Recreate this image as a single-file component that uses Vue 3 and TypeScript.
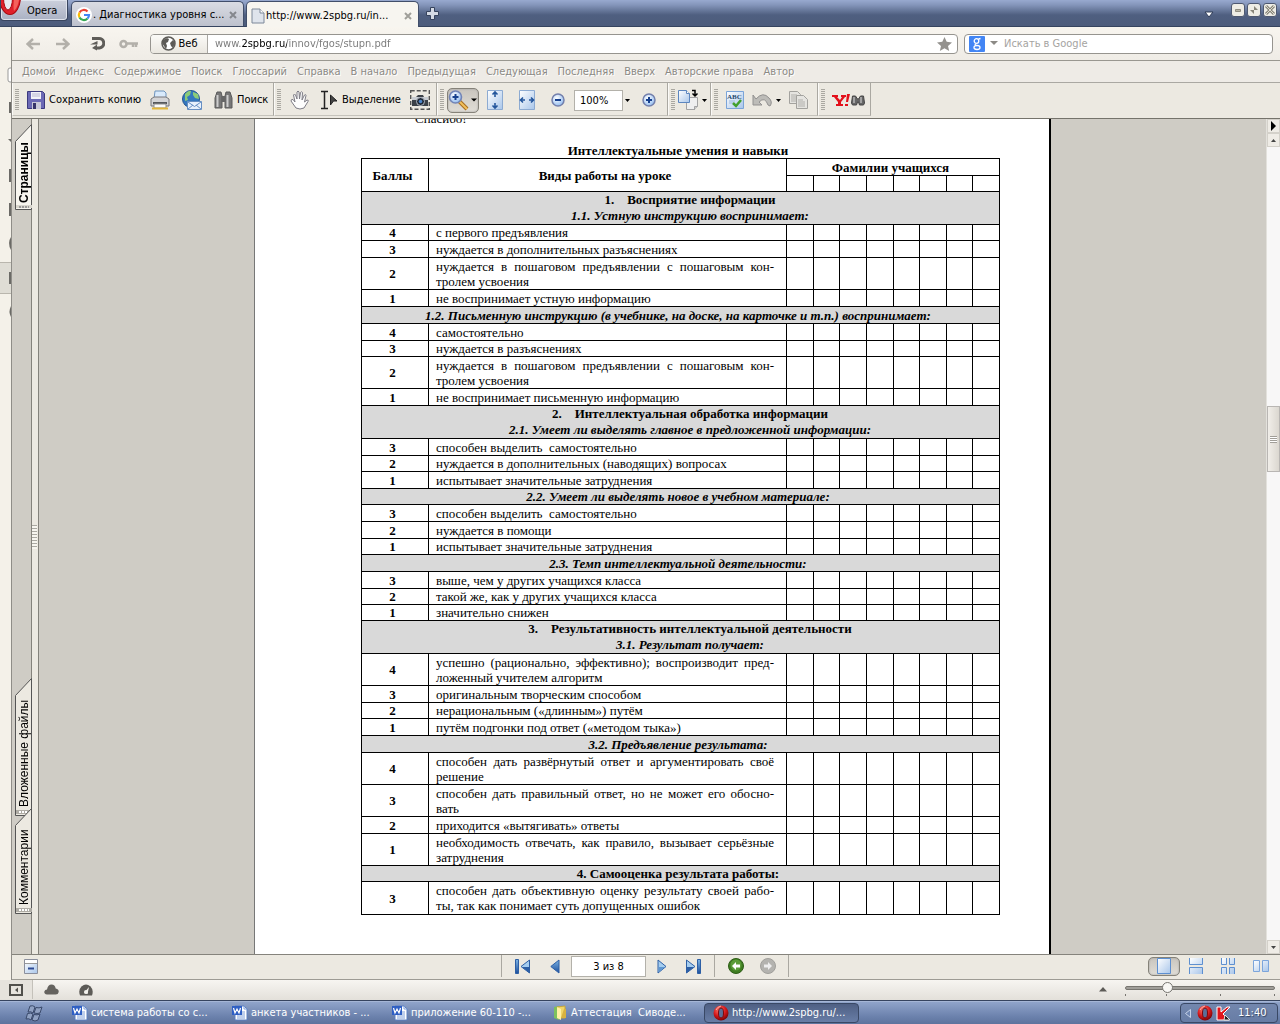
<script setup lang="ts">
import { ref } from 'vue'

interface Row {
  kind: 'row' | 'head' | 'group'
  size: 's16' | 's17' | 's32' | 's33'
  score?: number
  lines: string[]
}

const row = (size: Row['size'], score: number, ...lines: string[]): Row => ({ kind: 'row', size, score, lines })
const head = (size: Row['size'], text: string): Row => ({ kind: 'head', size, lines: [text] })
const group = (...lines: string[]): Row => ({ kind: 'group', size: 's33', lines })

const gap = '\u00a0\u00a0\u00a0\u00a0'

const rows: Row[] = [
  group('1.' + gap + 'Восприятие информации', '1.1. Устную инструкцию воспринимает:'),
  row('s16', 4, 'с первого предъявления'),
  row('s17', 3, 'нуждается в дополнительных разъяснениях'),
  row('s32', 2, 'нуждается в пошаговом предъявлении с пошаговым кон-', 'тролем усвоения'),
  row('s17', 1, 'не воспринимает устную информацию'),
  head('s17', '1.2. Письменную инструкцию (в учебнике, на доске, на карточке и т.п.) воспринимает:'),
  row('s17', 4, 'самостоятельно'),
  row('s16', 3, 'нуждается в разъяснениях'),
  row('s32', 2, 'нуждается в пошаговом предъявлении с пошаговым кон-', 'тролем усвоения'),
  row('s17', 1, 'не воспринимает письменную информацию'),
  group('2.' + gap + 'Интеллектуальная обработка информации', '2.1. Умеет ли выделять главное в предложенной информации:'),
  row('s17', 3, 'способен выделить\u00a0 самостоятельно'),
  row('s16', 2, 'нуждается в дополнительных (наводящих) вопросах'),
  row('s17', 1, 'испытывает значительные затруднения'),
  head('s16', '2.2. Умеет ли выделять новое в учебном материале:'),
  row('s17', 3, 'способен выделить\u00a0 самостоятельно'),
  row('s17', 2, 'нуждается в помощи'),
  row('s16', 1, 'испытывает значительные затруднения'),
  head('s17', '2.3. Темп интеллектуальной деятельности:'),
  row('s17', 3, 'выше, чем у других учащихся класса'),
  row('s16', 2, 'такой же, как у других учащихся класса'),
  row('s16', 1, 'значительно снижен'),
  group('3.' + gap + 'Результативность интеллектуальной деятельности', '3.1. Результат получает:'),
  row('s32', 4, 'успешно (рационально, эффективно); воспроизводит пред-', 'ложенный учителем алгоритм'),
  row('s17', 3, 'оригинальным творческим способом'),
  row('s16', 2, 'нерациональным («длинным») путём'),
  row('s17', 1, 'путём подгонки под ответ («методом тыка»)'),
  head('s17', '3.2. Предъявление результата:'),
  row('s32', 4, 'способен дать развёрнутый ответ и аргументировать своё', 'решение'),
  row('s32', 3, 'способен дать правильный ответ, но не может его обосно-', 'вать'),
  row('s17', 2, 'приходится «вытягивать» ответы'),
  row('s32', 1, 'необходимость отвечать, как правило, вызывает серьёзные', 'затруднения'),
  head('s16', '4. Самооценка результата работы:'),
  row('s33', 3, 'способен дать объективную оценку результату своей рабо-', 'ты, так как понимает суть допущенных ошибок'),
]

const links = ['Домой', 'Индекс', 'Содержимое', 'Поиск', 'Глоссарий', 'Справка', 'В начало', 'Предыдущая',
  'Следующая', 'Последняя', 'Вверх', 'Авторские права', 'Автор']

const tasks = [
  { icon: 'word', text: 'система работы со с...', active: false },
  { icon: 'word', text: 'анкета участников - ...', active: false },
  { icon: 'word', text: 'приложение 60-110 -...', active: false },
  { icon: 'folder', text: 'Аттестация\u00a0 Сиводе...', active: false },
  { icon: 'opera', text: 'http://www.2spbg.ru/...', active: true },
]

const address = ref('www.2spbg.ru/innov/fgos/stupn.pdf')
const query = ref('')
const zoom = ref('100%')
const page = ref('3 из 8')
const scale = ref(26)
</script>

<template>
  <div class="browser">
    <svg class="defs" aria-hidden="true">
      <defs>
        <linearGradient id="gBlue" x1="0" y1="0" x2="1" y2="1"><stop offset="0" stop-color="#fff" /><stop offset="1" stop-color="#a9c6ea" /></linearGradient>
        <linearGradient id="gNav" x1="0" y1="0" x2="0" y2="1"><stop offset="0" stop-color="#7db4e4" /><stop offset="1" stop-color="#1d4f9c" /></linearGradient>
        <radialGradient id="gRed" cx=".4" cy=".3" r=".7"><stop offset="0" stop-color="#ff7a6c" /><stop offset=".6" stop-color="#d3161a" /><stop offset="1" stop-color="#7d0508" /></radialGradient>
        <radialGradient id="gLens" cx=".4" cy=".35" r=".7"><stop offset="0" stop-color="#fff" /><stop offset="1" stop-color="#8db9ef" /></radialGradient>
      </defs>
      <symbol id="word" viewBox="0 0 16 16">
        <path d="M3 1h9l3 3v11H3z" fill="#fff" stroke="#5b7ec0" />
        <path d="M12 1v3h3M10 7h3M10 9h3M5 11h8M5 13h8" fill="none" stroke="#7f9fd8" />
        <path d="M0 1h10v9H0z" fill="#2f5fc4" />
        <path d="M1.500 3l1.500 5 2-4 2 4 1.500-5" fill="none" stroke="#fff" stroke-width="1.200" />
      </symbol>
      <symbol id="folder" viewBox="0 0 16 16">
        <path d="M2 2l5-1v14l-5-2z" fill="#7cc05e" />
        <path d="M5 2l8-1v12H7z" fill="#f1d667" stroke="#c6a63c" />
        <path d="M5 2l4 2v11l-4-2z" fill="#fff1a5" />
        <path d="M12 4h2v9h-5" fill="#d8b23f" />
      </symbol>
      <symbol id="opera" viewBox="0 0 16 16">
        <circle cx="8" cy="8" r="7.500" fill="url(#gRed)" />
        <ellipse cx="8" cy="8" rx="2.500" ry="5" fill="#5a6e97" stroke="#7c070a" />
        <path d="M3 5q1-3 5-4" fill="none" stroke="#ffb3a8" />
      </symbol>
    </svg>

    <header class="titlebar">
      <button class="opera-menu" type="button">
        <svg width="20" height="16" viewBox="0 0 20 16"><ellipse cx="9" cy="-3" rx="11" ry="18" fill="#a80a10" /><ellipse cx="9" cy="-3" rx="10" ry="17" fill="#e0202a" /><path d="M13 0h5q-1 7-5 11-1-4 0-11z" fill="#f4625c" /><ellipse cx="7" cy="-2" rx="4.500" ry="12" fill="#e9ebf1" stroke="#a80a10" /></svg>
        <span>Opera</span>
      </button>
      <div class="tabs">
        <div class="tab">
          <svg width="16" height="16" viewBox="0 0 16 16"><circle cx="8" cy="8" r="8" fill="#fff" /><g fill="none" stroke-width="2.200"><path d="M3.500 5.500A5 5 0 0 1 11.500 4.500" stroke="#ea4335" /><path d="M3.500 5.500a5 5 0 0 0 0 5" stroke="#fbbc05" /><path d="M3.500 10.500a5 5 0 0 0 8 1" stroke="#34a853" /><path d="M11.500 11.500A5 5 0 0 0 13 8H8" stroke="#4285f4" /></g></svg>
          <span>. Диагностика уровня с...</span>
          <button class="close" type="button" aria-label="Закрыть"><svg width="8" height="8" viewBox="0 0 8 8"><path d="M1 1l6 6M7 1L1 7" stroke="#85878d" stroke-width="2" /></svg></button>
        </div>
        <div class="tab current">
          <svg width="14" height="16" viewBox="0 0 14 16"><path d="M1 1h8l4 4v10H1z" fill="#dfe4ec" stroke="#7d8899" /><path d="M9 1v4h4" fill="#fff" stroke="#7d8899" /></svg>
          <span>http://www.2spbg.ru/in...</span>
          <button class="close" type="button" aria-label="Закрыть"><svg width="8" height="8" viewBox="0 0 8 8"><path d="M1 1l6 6M7 1L1 7" stroke="#a09f9a" stroke-width="2" /></svg></button>
        </div>
      </div>
      <button class="plus" type="button" aria-label="Новая вкладка"><svg width="13" height="13" viewBox="0 0 13 13"><path d="M4.500.5h4v4h4v4h-4v4h-4v-4h-4v-4h4z" fill="#d5dae4" stroke="#36435d" /></svg></button>
      <button class="closed-tabs" type="button" aria-label="Закрытые вкладки"><svg width="10" height="7" viewBox="0 0 10 7"><path d="M1 1h8L5 6z" fill="#fff" stroke="#2f3c57" /></svg></button>
      <div class="window-buttons">
        <button type="button" aria-label="Свернуть"><svg width="12" height="12" viewBox="0 0 12 12"><path d="M3.500 5.500h5v2h-5z" fill="#b9b7a8" stroke="#8f8d80" /></svg></button>
        <button type="button" aria-label="Развернуть"><svg width="12" height="12" viewBox="0 0 12 12"><path d="M6 2l4 4H6zM6 10L2 6h4z" fill="#88867a" /></svg></button>
        <button type="button" aria-label="Закрыть окно"><svg width="12" height="12" viewBox="0 0 12 12"><path d="M2 2l8 8M10 2l-8 8" stroke="#88867a" stroke-width="3" /><path d="M2 2l8 8M10 2l-8 8" stroke="#dddbd0" /></svg></button>
      </div>
    </header>

    <div class="body">
      <aside class="sliver">
        <svg width="11" height="300" viewBox="0 0 11 300">
          <rect x="0" y="235" width="11" height="31" fill="#dfddd5" /><path d="M0 235.500h11M0 266.500h11" stroke="#b9b6ad" />
          <rect x="8" y="41" width="5" height="14" rx="2" fill="#fff" stroke="#999" />
          <g fill="#6b6a66"><rect x="9" y="75" width="2" height="11" /><path d="M8 112h3v3z" /><rect x="9" y="142" width="2" height="13" /><rect x="9" y="176" width="2" height="13" /><path d="M11 210q-4 6 0 13z" /><rect x="9" y="245" width="2" height="12" /><path d="M11 279q-3 6 0 11z" /></g>
        </svg>
      </aside>

      <div class="main">
        <div class="address-bar">
          <button class="nav" type="button" aria-label="Назад"><svg width="14" height="12" viewBox="0 0 14 12"><path d="M7 1L1.500 6 7 11M2 6h12" fill="none" stroke="#b3b0aa" stroke-width="2.500" /></svg></button>
          <button class="nav" type="button" aria-label="Вперёд"><svg width="14" height="12" viewBox="0 0 14 12"><path d="M7 1l5.500 5L7 11M12 6H0" fill="none" stroke="#b3b0aa" stroke-width="2.500" /></svg></button>
          <button class="nav reload" type="button" aria-label="Обновить"><svg width="15" height="15" viewBox="0 0 15 15"><path d="M2 2.500h6.500a4.500 4.500 0 0 1 1 9.500H6" fill="none" stroke="#5f5d59" stroke-width="3" /><path d="M0 8.500h7.500V5zM7 8.500v6L2 12z" fill="#5f5d59" /></svg></button>
          <button class="nav key" type="button" aria-label="Пароли"><svg width="19" height="10" viewBox="0 0 19 10"><circle cx="4.500" cy="5" r="3" fill="none" stroke="#b3b0aa" stroke-width="2.500" /><path d="M8 4.500h11M14 5v3M17 5v3" stroke="#b3b0aa" stroke-width="2.500" /></svg></button>
          <div class="field address">
            <button class="web" type="button">
              <svg width="15" height="15" viewBox="0 0 15 15"><circle cx="7.500" cy="7.500" r="6.500" fill="#fff" stroke="#5d5b57" stroke-width="1.500" /><path d="M2 4l4-2 2 1-1 3-2 1 1 3-1 3-2-3-2-3zM9 7l3-3 2 3-2 5-2-2z" fill="#5d5b57" /></svg>
              <span>Веб</span>
            </button>
            <input v-model="address" class="url" type="text" aria-label="Адрес" spellcheck="false">
            <svg class="star" width="15" height="14" viewBox="0 0 15 14"><path d="M7.500 0l2.200 4.800 5.300.6-4 3.500 1.200 5.100-4.700-2.700L2.800 14 4 8.900 0 5.400l5.300-.6z" fill="#94928e" /></svg>
          </div>
          <div class="field search">
            <svg width="16" height="16" viewBox="0 0 16 16"><rect width="16" height="16" rx="1" fill="#4285f4" /><g fill="none" stroke="#fff" stroke-width="1.300"><circle cx="7.500" cy="5" r="2.300" /><path d="M9.500 3l2-.5M6.500 7.500q-1 1.500 1 2" /><ellipse cx="8" cy="11.500" rx="3" ry="2" /></g></svg>
            <svg width="8" height="5" viewBox="0 0 8 5"><path d="M0 0h8L4 4z" fill="#8c8a85" /></svg>
            <input v-model="query" type="text" aria-label="Поиск в Google" placeholder="Искать в Google">
          </div>
        </div>

        <nav class="links"><a v-for="link in links" :key="link" href="#">{{ link }}</a></nav>

        <div class="toolbar">
          <div class="tools file">
            <button type="button" class="labelled"><svg width="18" height="18" viewBox="0 0 18 18"><path d="M.5.500h15l2 2v15H.5z" fill="#6b69b5" stroke="#3b397e" /><path d="M4 1h10v7H4z" fill="#f2f2f8" /><path d="M5 11h9v7H5z" fill="#c9c9d9" /><path d="M6 12h3v6H6z" fill="#36346b" /><path d="M5 3h8M5 5h8" stroke="#b9b8d2" /></svg><span>Сохранить копию</span></button>
            <button type="button" aria-label="Печать"><svg width="20" height="20" viewBox="0 0 20 20"><path d="M5 1h9l2 2v6H4z" fill="#d9eafb" stroke="#6e94bd" /><path d="M1 9l3-2h12l3 2v7H1z" fill="#d4d4d6" stroke="#76777a" /><path d="M3 12h14v2H3z" fill="#56585c" /><path d="M4 14h12v4H4z" fill="#fafafa" stroke="#8e8e8e" /><path d="M2 18.500h16" stroke="#e3b63b" stroke-width="2" /></svg></button>
            <button type="button" aria-label="Отправить"><svg width="20" height="20" viewBox="0 0 20 20"><circle cx="9" cy="9" r="8.500" fill="#3477be" stroke="#235590" /><path d="M3 4q4-4 6-3l-1 4-3 2 1 3-3 1zM11 2l5 2 1 5-4-1-2-3zM5 12l4 1v4z" fill="#8ccb78" /><path d="M5.500 11.500h14v8h-14z" fill="#e7f1fd" stroke="#668fc3" /><path d="M6 12l6.500 4.500L19 12M6 19l5-4M19 19l-5-4" fill="none" stroke="#668fc3" /></svg></button>
            <button type="button" class="labelled"><svg width="19" height="18" viewBox="0 0 19 18"><path d="M3 1h4l1 4v12H1V7zM12 1h4l2 6v10h-7V5z" fill="#777" stroke="#5a5a5a" /><path d="M8 5h3v6H8z" fill="#666" /><path d="M3.500 4v12M13.500 4v12" stroke="#cecece" stroke-width="2" /></svg><span>Поиск</span></button>
          </div>
          <div class="tools select">
            <button type="button" aria-label="Рука"><svg width="19" height="20" viewBox="0 0 19 20"><path d="M6 18L1 11q0-2 2-1.500L5 12 3.500 5q1-2 2 0L7 9 7 2q1-2 2 0l.5 7 1-6.500q1-1.500 2 0L12 10l2.500-5q1.500-1 1.500.5L14.500 12 17 10q2 0 1 1.500L14 18q-4 2-8 0z" fill="#fdfdfd" stroke="#7e7d86" /></svg></button>
            <button type="button" class="labelled"><svg width="18" height="20" viewBox="0 0 18 20"><path d="M1 1.500h7M1 18.500h7M4.500 2v16" stroke="#222" stroke-width="1.500" /><path d="M10.500 5l6.500 6h-3.500l-3 4z" fill="#444" stroke="#222" /></svg><span>Выделение</span></button>
            <button type="button" aria-label="Снимок"><svg width="20" height="20" viewBox="0 0 20 20"><path d="M.7.700h18.600v18.600H.7z" fill="none" stroke="#555" stroke-width="1.400" stroke-dasharray="4 2" /><path d="M2 7h4l2-2h5l1 2h4v9H2z" fill="#3c4148" /><path d="M2 7h16v3H2z" fill="#c8ccd2" /><circle cx="10.500" cy="11.500" r="4" fill="#222a38" stroke="#b3bac4" /><circle cx="10.500" cy="11.500" r="1.800" fill="#4d86c9" /></svg></button>
          </div>
          <div class="tools zooming">
            <button type="button" class="pressed" aria-label="Увеличение"><svg width="30" height="22" viewBox="0 0 30 22"><path d="M11 12l8 8" stroke="#a86d20" stroke-width="4" /><path d="M11 12l8 8" stroke="#f1c15c" stroke-width="2" /><circle cx="7.500" cy="8" r="6" fill="url(#gLens)" stroke="#7284b6" stroke-width="1.600" /><path d="M4.500 8h6M7.500 5v6" stroke="#16408e" stroke-width="2" /><path d="M23 9.500h6l-3 3z" fill="#000" /></svg></button>
            <button type="button" aria-label="Страница целиком"><svg width="16" height="20" viewBox="0 0 16 20"><path d="M.5.500h15v19H.5z" fill="url(#gBlue)" stroke="#8dabd2" /><path d="M8 2v5M8 13v5M5.500 4.500L8 2l2.500 2.500M5.500 15.500L8 18l2.500-2.500" fill="none" stroke="#24569c" stroke-width="1.600" /></svg></button>
            <button type="button" aria-label="По ширине"><svg width="16" height="20" viewBox="0 0 16 20"><path d="M.5.500h15v19H.5z" fill="url(#gBlue)" stroke="#8dabd2" /><path d="M2 10h4M10 10h4M4 7.500L1.500 10 4 12.500M12 7.500l2.500 2.500-2.500 2.500" fill="none" stroke="#24569c" stroke-width="1.600" /></svg></button>
            <button type="button" aria-label="Уменьшить"><svg width="14" height="14" viewBox="0 0 14 14"><circle cx="7" cy="7" r="6" fill="url(#gLens)" stroke="#7480ac" stroke-width="1.500" /><path d="M4 7h6" stroke="#16408e" stroke-width="2" /></svg></button>
            <div class="combo"><input v-model="zoom" type="text" aria-label="Масштаб"><button type="button" aria-label="Список масштабов"><svg width="5" height="3" viewBox="0 0 5 3"><path d="M0 0h5L2.500 3z" /></svg></button></div>
            <button type="button" aria-label="Увеличить"><svg width="14" height="14" viewBox="0 0 14 14"><circle cx="7" cy="7" r="6" fill="url(#gLens)" stroke="#7480ac" stroke-width="1.500" /><path d="M4 7h6M7 4v6" stroke="#16408e" stroke-width="2" /></svg></button>
          </div>
          <div class="tools turn">
            <button type="button" aria-label="Повернуть"><svg width="30" height="22" viewBox="0 0 30 22"><path d="M8.500 8.500h11v9l-3 3h-8z" fill="#efefef" stroke="#a3a3a3" /><path d="M16.500 21v-3.500h3" fill="#ccc" stroke="#a3a3a3" /><path d="M.5 1.500h8l3 3v9H.5z" fill="url(#gBlue)" stroke="#5c86bf" /><path d="M8.500 1.500v3h3" fill="#fff" stroke="#5c86bf" /><path d="M14 1.500h3V6M14.500 4.500L17 7l2.500-2.500" fill="none" stroke="#000" stroke-width="1.500" /><path d="M24 10h5l-2.500 3z" fill="#000" /></svg></button>
          </div>
          <div class="tools edit">
            <button type="button" aria-label="Правописание"><svg width="18" height="18" viewBox="0 0 18 18"><path d="M.5.500h17v17H.5z" fill="url(#gBlue)" stroke="#7ba4d8" /><text x="1" y="8" font-size="7" font-weight="700" fill="#25486f" font-family="Liberation Serif">ABC</text><path d="M3 10h6M3 12h4" stroke="#9cb9dd" /><path d="M7 12l3 3 5-6" fill="none" stroke="#43a02c" stroke-width="2.500" /></svg></button>
            <button type="button" aria-label="Отменить"><svg width="29" height="16" viewBox="0 0 29 16"><path d="M1 3v10h9l-3-3q6-6 9 3l2 1q3-4-1-8Q11-1 4 7z" fill="#bdbcb8" stroke="#929190" /><path d="M24 7h5l-2.500 3z" fill="#000" /></svg></button>
            <button type="button" aria-label="Копировать"><svg width="19" height="18" viewBox="0 0 19 18"><path d="M.5.500h8l3 3v9H.5z" fill="#e5e4e0" stroke="#a3a29e" /><path d="M2 4h6M2 6h5M2 8h5M2 10h5" stroke="#b0afab" /><path d="M7.500 4.500h7l4 4v9h-11z" fill="#e5e4e0" stroke="#a3a29e" /><path d="M9 9h5M9 11h7M9 13h7M9 15h7" stroke="#b0afab" /></svg></button>
          </div>
          <div class="tools yahoo">
            <button type="button" aria-label="Yahoo"><svg width="33" height="14" viewBox="0 0 33 14"><path d="M0 2h6v2H5l3 3 2-3H9V2h5v2h-1l-4 5v2h2v2H4v-2h2V9L2 4H0zM15 1h3l-2 8h-2zM13 11h3v2h-3z" fill="#e3101a" /><path d="M20.500 3h3l2 3h1l2-3h3l1 7-1 2h-4l-1-3h-1l-1 3h-4l-1-2z" fill="#666" stroke="#444" /><path d="M22 4v6M29 4v6" stroke="#b5b5b5" stroke-width="1.500" /></svg></button>
          </div>
        </div>

        <div class="reader">
          <div class="rail">
            <button class="side first" type="button"><svg width="17" height="86" viewBox="0 0 17 86"><path d="M.5 85.500V17.500L16.500.5v85z" fill="#f7f5ef" stroke="#555" /><path d="M1 81h16v3H1z" fill="#d8d5cd" /><path d="M4 83h10" stroke="#999" stroke-width="2" stroke-dasharray="2 1" /></svg><span>Страницы</span></button>
            <button class="side second" type="button"><svg width="17" height="138" viewBox="0 0 17 138"><path d="M.5 137.500v-120L16.500.5v137z" fill="#ece9e1" stroke="#555" /><path d="M1 132h16v4H1z" fill="#aeaba4" /><path d="M4 134h10" stroke="#fff" stroke-width="2" stroke-dasharray="2 1" /></svg><span>Вложенные файлы</span></button>
            <button class="side third" type="button"><svg width="17" height="106" viewBox="0 0 17 106"><path d="M.5 105.500v-88L16.500.5v105z" fill="#ece9e1" stroke="#555" /><path d="M1 100h16v4H1z" fill="#aeaba4" /><path d="M4 102h10" stroke="#fff" stroke-width="2" stroke-dasharray="2 1" /></svg><span>Комментарии</span></button>
          </div>
          <div class="splitter"><i /></div>
          <div class="desk">
            <article class="paper">
              <p class="cut">Спасибо!</p>
              <h1>Интеллектуальные умения и навыки</h1>
              <table>
                <colgroup><col class="c-score"><col><col v-for="n in 8" :key="n" :class="[2, 5, 7].includes(n) ? 'c26' : 'c27'"></colgroup>
                <thead>
                  <tr class="s17"><th rowspan="2">Баллы</th><th rowspan="2">Виды работы на уроке</th><th colspan="8">Фамилии учащихся</th></tr>
                  <tr class="s16"><td v-for="n in 8" :key="n" /></tr>
                </thead>
                <tbody>
                  <tr v-for="(r, i) in rows" :key="i" :class="r.size">
                    <template v-if="r.kind === 'row'">
                      <th scope="row">{{ r.score }}</th>
                      <td class="task-text"><span v-for="(line, k) in r.lines" :key="k" :class="{ full: k < r.lines.length - 1 }">{{ line }}</span></td>
                      <td v-for="n in 8" :key="n" />
                    </template>
                    <th v-else colspan="10" :class="r.kind"><span v-for="(line, k) in r.lines" :key="k" :class="{ plain: r.kind === 'group' ? k === 0 : line.startsWith('4.') }">{{ line }}</span></th>
                  </tr>
                </tbody>
              </table>
            </article>
          </div>
          <div class="scroll">
            <button type="button" aria-label="Меню"><svg width="6" height="10" viewBox="0 0 6 10"><path d="M0 0l5 5-5 5z" /></svg></button>
            <button type="button" aria-label="Вверх"><svg width="5" height="3" viewBox="0 0 5 3"><path d="M0 3h5L2.500 0z" fill="#444" /></svg></button>
            <div class="track"><div class="thumb"><i /></div></div>
            <button type="button" aria-label="Вниз"><svg width="5" height="3" viewBox="0 0 5 3"><path d="M0 0h5L2.500 3z" fill="#444" /></svg></button>
          </div>
        </div>

        <div class="pager">
          <div class="pager-left"><button type="button" aria-label="Скрыть"><svg width="14" height="15" viewBox="0 0 14 15"><path d="M.5.500h13v14H.5z" fill="url(#gBlue)" stroke="#8b8f9c" /><path d="M1 1h12v3H1z" fill="#fff" /><path d="M1 4.500h12" stroke="#999" /><path d="M4 9.500h6" stroke="#2d4a94" stroke-width="2" /></svg></button></div>
          <div class="pages">
            <button type="button" aria-label="Первая"><svg width="16" height="15" viewBox="0 0 16 15"><path d="M.5.500h3v14h-3z" fill="url(#gNav)" stroke="#2d5fa5" /><path d="M14.500 1v13L6 7.500z" fill="#a5cdef" stroke="#2d5fa5" /><path d="M14.500 8v6L7 8z" fill="#2d5fa5" /></svg></button>
            <button type="button" aria-label="Предыдущая"><svg width="10" height="15" viewBox="0 0 10 15"><path d="M9 1v13L.8 7.500z" fill="url(#gNav)" stroke="#2d5fa5" /></svg></button>
            <input v-model="page" type="text" aria-label="Страница">
            <button type="button" aria-label="Следующая"><svg width="10" height="15" viewBox="0 0 10 15"><path d="M1 1v13l8-6.500z" fill="#a5cdef" stroke="#2d5fa5" /><path d="M2 13V8h6z" fill="#5f97d1" /></svg></button>
            <button type="button" aria-label="Последняя"><svg width="16" height="15" viewBox="0 0 16 15"><path d="M12.500.500h3v14h-3z" fill="url(#gNav)" stroke="#2d5fa5" /><path d="M1.500 1v13L10 7.500z" fill="#a5cdef" stroke="#2d5fa5" /><path d="M1.500 8v6L9 8z" fill="#2d5fa5" /></svg></button>
          </div>
          <div class="history">
            <button type="button" aria-label="Предыдущий вид"><svg width="16" height="16" viewBox="0 0 16 16"><circle cx="8" cy="8" r="7.500" fill="#3f7d22" stroke="#2d5d17" /><circle cx="8" cy="7" r="5.500" fill="#5b9c38" /><path d="M8 4L4 8l4 4V9.500h4v-3H8z" fill="#fff" /></svg></button>
            <button type="button" aria-label="Следующий вид"><svg width="16" height="16" viewBox="0 0 16 16"><circle cx="8" cy="8" r="7.500" fill="#b4b3af" stroke="#a09f9b" /><path d="M8 4l4 4-4 4V9.500H4v-3h4z" fill="#eee" /></svg></button>
          </div>
          <div class="views">
            <button type="button" class="pressed" aria-label="Одна страница"><svg width="14" height="16" viewBox="0 0 14 16"><path d="M.5.500h13v15H.5z" fill="url(#gBlue)" stroke="#5d8fd0" /></svg></button>
            <button type="button" aria-label="Непрерывно"><svg width="14" height="16" viewBox="0 0 14 16"><path d="M.5 0v6.500h13V0M.5 16V9.500h13V16" fill="url(#gBlue)" stroke="#5d8fd0" /></svg></button>
            <button type="button" aria-label="Непрерывно, разворот"><svg width="14" height="16" viewBox="0 0 14 16"><path d="M.5 0v6.500h5V0M8.500 0v6.500h5V0M.5 16V9.500h5V16M8.500 16V9.500h5V16" fill="url(#gBlue)" stroke="#5d8fd0" /></svg></button>
            <button type="button" aria-label="Разворот"><svg width="16" height="12" viewBox="0 0 16 12"><path d="M.5.500h6v11h-6zM9.500.500h6v11h-6z" fill="url(#gBlue)" stroke="#7ca5db" /></svg></button>
          </div>
        </div>
      </div>
    </div>

    <footer class="status">
      <button type="button" class="panel" aria-label="Панели"><svg width="14" height="12" viewBox="0 0 14 12"><path d="M1 1h12v10H1z" fill="none" stroke="#51504c" stroke-width="2" /><path d="M9 3.500v5L6 6z" fill="#51504c" /></svg></button>
      <button type="button" class="cloud" aria-label="Opera Link"><svg width="15" height="11" viewBox="0 0 15 11"><path d="M3 10.500Q0 10 .3 7.500 1 5.500 3 5.500 4 .5 7.500.5t4.200 4Q15 5 14.700 8q-.5 2.500-3 2.500z" fill="#65635f" /></svg></button>
      <button type="button" aria-label="Opera Turbo"><svg width="14" height="12" viewBox="0 0 14 12"><path d="M1 11.500Q-1 6 2.500 2.500 7-1.500 11.500 2.500 15 6 13 11.500z" fill="#5d5b57" /><path d="M5 9l5-6-1.500 7z" fill="#f3f1ec" /><circle cx="7" cy="8" r="2" fill="#f3f1ec" /></svg></button>
      <button type="button" class="scale-menu" aria-label="Масштаб страницы"><svg width="8" height="5" viewBox="0 0 8 5"><path d="M0 4.500h8L4 0z" fill="#5d5b57" /></svg></button>
      <div class="slider">
        <input v-model="scale" type="range" min="0" max="100" aria-label="Масштаб">
        <div class="ticks"><i /><i /><i /><i /></div>
      </div>
    </footer>

    <footer class="taskbar">
      <button type="button" class="start" aria-label="Пуск"><svg width="19" height="17" viewBox="0 0 19 17"><path d="M5 1q3-1 5 1L8 8Q6 6 3 7zM11 2.500q3 1 6-.5l-2 6q-3 1-6 0zM2.500 8.500Q6 7.500 8 9l-2 6q-2-2-5-1zM9 9.500q3 1 6-.5l-2 6q-3 2-6 0z" fill="#8fa1c2" stroke="#3a4a6b" /></svg></button>
      <div class="tasks">
        <button v-for="t in tasks" :key="t.text" type="button" :class="{ active: t.active }">
          <svg width="16" height="16"><use :href="'#' + t.icon" /></svg><span>{{ t.text }}</span>
        </button>
      </div>
      <div class="tray">
        <svg width="6" height="9" viewBox="0 0 6 9"><path d="M5.500.500v8l-5-4z" fill="#6f86b2" stroke="#c6d2e8" /></svg>
        <svg width="16" height="16"><use href="#opera" /></svg>
        <svg width="15" height="15" viewBox="0 0 15 15"><path d="M1 1h4v5l6-5h3L7 8l6 6H1z" fill="#e0151c" stroke="#fff" /><path d="M9 9l5 5H8z" fill="#222" stroke="#ddd" /></svg>
        <time>11:40</time>
      </div>
    </footer>
  </div>
</template>

<style>
body { margin: 0; }
</style>

<style scoped>
* { box-sizing: border-box; }
.browser { display: flex; flex-direction: column; min-height: 100vh; background: #f4f1ea; color: #000; font: 11px/14px "DejaVu Sans Condensed", "Noto Sans", sans-serif; overflow: hidden; }
.defs { position: absolute; width: 0; height: 0; }
button { display: flex; flex: none; align-items: center; justify-content: center; margin: 0; padding: 0; border: 0; background: none; color: inherit; font: inherit; white-space: nowrap; }
input { min-width: 0; margin: 0; padding: 0; border: 0; outline: 0; background: none; color: inherit; font: inherit; }
svg { display: block; flex: none; }
span { white-space: nowrap; }

.titlebar { display: flex; align-items: flex-end; height: 27px; border-bottom: 1px solid #36445f; background: linear-gradient(#98a9cf, #8495ba 5px, #4f5f80 15px, #4d5c7c); }
.opera-menu { align-self: flex-start; gap: 6px; width: 68px; height: 21px; justify-content: flex-start; align-items: flex-start; border: 1px solid #39455f; border-top: 0; border-radius: 0 0 4px 4px; background: linear-gradient(#ccd0dc, #aab1c3); box-shadow: inset 0 0 0 1px #dfe3ec; }
.opera-menu span { padding-top: 4px; }
.tabs { display: flex; gap: 2px; margin-left: 3px; }
.tab { display: flex; align-items: center; width: 173px; height: 25px; padding: 2px 6px 0 4px; border: 1px solid #414e6a; border-bottom: 0; border-radius: 5px 5px 0 0; background: linear-gradient(#dadce3, #bdc1cd); }
.tab span { flex: 1; margin-left: 1px; overflow: hidden; }
.tab.current { height: 26px; margin-bottom: -1px; background: #f7f5f0; }
.plus { margin: 0 0 6px 7px; }
.closed-tabs { margin: 0 17px 8px auto; }
.window-buttons { display: flex; align-self: flex-start; gap: 2px; padding: 3px 3px 0 0; }
.window-buttons button { width: 14px; height: 14px; border: 1px solid #4d5870; border-radius: 3px; background: #eeede5; }

.body { display: flex; flex: 1; }
.sliver { width: 11px; background: #f4f1e9; }
.main { display: flex; flex: 1; flex-direction: column; min-width: 0; border-left: 1px solid #8f8d88; background: #ece9e1; }

.address-bar { display: flex; align-items: center; height: 34px; padding: 0 7px 0 14px; border-bottom: 1px solid #999790; background: linear-gradient(#f8f5ef, #efece6); }
.nav { width: 14px; margin-right: 16px; }
.reload { width: 15px; margin: 0 14px 0 4px; }
.key { width: 19px; margin-right: 12px; }
.field { display: flex; align-items: center; height: 20px; border: 1px solid #96948f; border-radius: 4px; background: #fff; }
.address { flex: 1; margin-right: 6px; }
.web { gap: 3px; width: 57px; height: 18px; border-right: 1px solid #aaa8a3; border-radius: 3px 0 0 3px; background: linear-gradient(#fbfaf7, #eae7e0); }
.url { flex: 1; height: 16px; padding-left: 7px; background: linear-gradient(90deg, #777 34px, #000 34px, #000 79px, #777 79px); background-clip: text; -webkit-background-clip: text; color: transparent; }
.star { margin-right: 5px; }
.search { width: 309px; padding-left: 4px; }
.search svg + svg { margin: 0 6px 0 5px; }
.search input { flex: 1; }
.search input::placeholder { color: #a5a39f; opacity: 1; }

.links { display: flex; align-items: center; gap: 10px; height: 22px; padding: 1px 0 0 10px; border-bottom: 1px solid #aaa8a2; background: #eeebe6; }
.links a { color: #8b8984; text-decoration: none; text-shadow: 1px 1px 0 #fff; white-space: nowrap; }

.toolbar { display: flex; height: 36px; padding-bottom: 2px; border-bottom: 1px solid #75736b; background: #ece9e1; }
.tools { display: flex; flex: none; align-items: center; padding-top: 2px; border-right: 1px solid #aaa8a1; border-left: 1px solid #fbfaf7; border-bottom: 1px solid #c5c3bb; }
.tools::before { content: ""; width: 4px; height: 22px; margin-left: 2px; background: repeating-linear-gradient(#aaa8a1 0 1px, transparent 1px 2px); }
.labelled { gap: 4px; justify-content: flex-start; }
.file { width: 262px; }
.file button { margin-right: 12px; }
.file button:first-of-type { width: 112px; margin: 0 11px 0 8px; }
.file button:last-child { margin-right: 0; }
.select { width: 163px; }
.select button:first-of-type { margin-left: 9px; }
.select .labelled { width: 79px; margin: 0 11px; }
.zooming { width: 231px; }
.pressed { border: 1px solid #858279; border-radius: 5px; background: linear-gradient(#c9c5be, #e0ddd6); box-shadow: inset 0 0 2px #999; }
.zooming .pressed { width: 32px; height: 25px; margin-left: 3px; }
.zooming button + button { margin-left: 16px; }
.zooming .pressed + button { margin-left: 8px; }
.combo { display: flex; align-items: center; margin: 0 11px 0 9px; }
.combo input { width: 49px; height: 21px; padding-left: 5px; border: 1px solid #b3b1aa; background: #fff; }
.combo button { width: 8px; height: 20px; }
.turn { width: 43px; }
.turn button { margin-left: 3px; }
.edit { width: 107px; }
.edit button { margin-left: 8px; }
.yahoo { width: 53px; }
.yahoo button { margin-left: 7px; }

.reader { display: flex; flex: 1; background: #cfccc5; }
.rail { display: flex; flex-direction: column; width: 20px; padding: 5px 0 40px 3px; border-right: 1px solid #84827b; }
.side { position: relative; width: 17px; }
.side span { position: absolute; inset: 17px 0 5px; display: flex; align-items: center; justify-content: center; writing-mode: vertical-rl; transform: rotate(180deg); font: 12px/14px "Liberation Sans", sans-serif; }
.side.first span { font-weight: 700; }
.second { margin-top: auto; }
.third { margin-top: -8px; }
.splitter { display: flex; align-items: center; width: 7px; background: #ece9e1; border-right: 1px solid #84827b; }
.splitter i { width: 5px; height: 24px; background: repeating-linear-gradient(#aaa8a1 0 1px, #f7f5ef 1px 3px); }
.desk { display: flex; flex: 1; justify-content: center; min-width: 0; }
.paper { flex: 0 1 797px; padding: 0 49px 39px 106px; border-left: 1px solid #777; border-right: 2px solid #000; background: #fff; font: 13px/15px "Liberation Serif", serif; overflow: hidden; }
.cut { margin: -8px 0 16px 54px; line-height: 16px; }
.paper h1 { margin: 0; padding-right: 5px; font-size: 13px; line-height: 15px; text-align: center; }
table { width: 100%; table-layout: fixed; border: 1px solid #000; border-width: 0 1px 1px 0; border-spacing: 0; }
.c-score { width: 67px; }
.c26 { width: 26px; }
.c27 { width: 27px; }
th, td { padding: 0 5px 0 0; border: 1px solid #000; border-width: 1px 0 0 1px; font-size: 13px; line-height: 15px; vertical-align: middle; }
.s16 { height: 16px; }
.s17 { height: 17px; }
.s32 { height: 32px; }
.s33 { height: 33px; }
.task-text { padding: 0 12px 0 7px; }
.task-text span { display: block; }
.task-text .full { white-space: normal; text-align-last: justify; }
.head, .group { background: #d9d9d9; font-style: italic; }
.group { padding: 0 0 0 19px; line-height: 16px; }
.group span { display: block; }
.plain { font-style: normal; }

.scroll { display: flex; flex-direction: column; width: 14px; background: #f8f7f7; border-left: 1px solid #e3e1dc; }
.scroll button { height: 14px; border: 1px solid #d4d1ca; background: #efece6; }
.track { display: flex; flex: 1; flex-direction: column; }
.track::before { content: ""; flex: 259; }
.track::after { content: ""; flex: 468; }
.thumb { display: flex; align-items: center; justify-content: center; height: 66px; border: 1px solid #b9b6b3; background: linear-gradient(90deg, #f1eee9, #dbd7d0); }
.thumb i { width: 7px; height: 7px; background: repeating-linear-gradient(#a19e98 0 1px, #fff 1px 2px); }

.pager { display: flex; align-items: center; height: 26px; padding-bottom: 2px; border-top: 1px solid #85837c; border-bottom: 1px solid #9d9b94; }
.pager-left, .views { display: flex; flex: 1; align-items: center; }
.pager-left { padding-left: 12px; }
.pages { display: flex; align-items: center; width: 214px; height: 22px; margin-left: -3px; padding-left: 13px; border-left: 1px solid #aaa8a1; border-right: 1px solid #aaa8a1; }
.pages button:nth-of-type(2) { margin-left: 19px; }
.pages input { width: 75px; height: 21px; margin: 0 11px; border: 1px solid #b3b1aa; background: #fff; text-align: center; }
.pages button:last-child { margin-left: 18px; }
.history { display: flex; align-items: center; gap: 16px; width: 74px; height: 22px; padding-left: 13px; border-right: 1px solid #aaa8a1; }
.views { justify-content: flex-end; gap: 18px; padding-right: 11px; }
.views .pressed { width: 32px; height: 19px; margin-right: -9px; }

.status { display: flex; align-items: center; height: 21px; padding-bottom: 1px; border-bottom: 1px solid #36445f; background: linear-gradient(#f7f5f1, #e3e0da); }
.panel { width: 33px; height: 19px; border-right: 1px solid #c4c1ba; background: #e6e3dd; }
.cloud { margin: 0 20px 0 11px; }
.scale-menu { margin: 0 18px 0 auto; }
.slider { display: flex; flex-direction: column; width: 150px; margin-right: 5px; }
.slider input { width: 150px; height: 12px; appearance: none; -webkit-appearance: none; }
.slider input::-webkit-slider-runnable-track { height: 4px; border: 1px solid #777570; border-radius: 2px; background: #a09e99; }
.slider input::-webkit-slider-thumb { -webkit-appearance: none; width: 11px; height: 11px; margin-top: -5px; border: 1px solid #777570; border-radius: 50%; background: #f8f7f4; }
.ticks { display: grid; grid-template-columns: 41fr 54fr 54fr 1px; height: 3px; }
.ticks i { width: 1px; height: 2px; background: #777570; }

.taskbar { display: flex; align-items: center; height: 24px; padding-bottom: 1px; border-top: 1px solid #a5b6d6; background: linear-gradient(#90a4ca, #6d83ae 60%, #5b719b); color: #fff; text-shadow: 1px 1px 1px #33425f; }
.start { width: 64px; padding-left: 4px; }
.tasks { display: flex; flex: 1; gap: 5px; min-width: 0; }
.tasks button { gap: 3px; width: 155px; height: 20px; padding-left: 8px; justify-content: flex-start; border-radius: 4px; }
.tasks .active { border: 1px solid #394865; background: linear-gradient(#4f6084, #687da6); }
.tray { display: flex; align-items: center; gap: 3px; width: 98px; height: 20px; margin-right: 2px; padding-left: 4px; border: 1px solid #394865; border-radius: 4px; background: linear-gradient(#7387ae, #677ca5); }
.tray svg:first-child { margin-right: 3px; }
.tray time { margin-left: 4px; }
</style>
